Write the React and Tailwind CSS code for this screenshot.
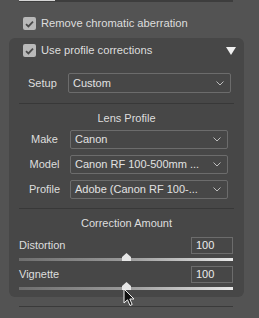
import React from "react";

function Check() {
  return (
    <div className="w-[13px] h-[13px] rounded-[2px] bg-[#b9b9b9] flex items-center justify-center">
      <svg width="9" height="8" viewBox="0 0 9 8">
        <path d="M1 4.2 3.4 6.4 8 1.6" fill="none" stroke="#4a4a4a" strokeWidth="1.8" />
      </svg>
    </div>
  );
}

function Chevron() {
  return (
    <svg width="8" height="5" viewBox="0 0 8 5" className="shrink-0">
      <path d="M0.5 0.5 4 4 7.5 0.5" fill="none" stroke="#bdbdbd" strokeWidth="1" />
    </svg>
  );
}

function Select({ text, className }) {
  return (
    <div
      className={
        "flex items-center justify-between border border-[#6c6c6c] rounded-[2px] pl-[4px] pr-[6px] text-[#e2e2e2] " +
        className
      }
    >
      <span className="whitespace-nowrap">{text}</span>
      <Chevron />
    </div>
  );
}

function Thumb() {
  return (
    <svg width="9" height="8" viewBox="0 0 9 8" className="absolute left-[103px] top-[-5px]">
      <path d="M4.5 0 9 4 9 8 0 8 0 4Z" fill="#e6e6e6" />
    </svg>
  );
}

function Slider({ label }) {
  return (
    <div className="flex flex-col">
      <div className="flex items-center justify-between h-[17px]">
        <span>{label}</span>
        <div className="w-[42px] h-[17px] border border-[#6c6c6c] pl-[4px] flex items-center text-[#ececec]">100</div>
      </div>
      <div className="relative mt-[4px] h-[3px] bg-gradient-to-r from-[#6e6e6e] via-[#9a9a9a] to-[#e8e8e8]">
        <Thumb />
      </div>
    </div>
  );
}

export default function App() {
  return (
    <div
      className="relative w-[259px] h-[318px] overflow-hidden bg-[#535353] text-[#dedede] text-[11px] leading-none"
      style={{ fontFamily: '"Liberation Sans", Arial, sans-serif' }}
    >
      <div className="ml-[19px] w-[214px] h-[2px] bg-[#3d3d3d] flex">
        <div className="w-[36px] h-[1px] bg-[#d6d6d6]" />
      </div>

      <div className="flex items-center gap-[5px] pl-[23px] mt-[15px] h-[13px]">
        <Check />
        <span className="text-[11.2px]">Remove chromatic aberration</span>
      </div>

      <div className="ml-[9px] mt-[8px] w-[235px] h-[259px] rounded-[6px] bg-[#474747] px-[10px] flex flex-col">
        <div className="flex items-center justify-between pl-[4px] -mr-[2px] mt-[6px] h-[13px]">
          <div className="flex items-center gap-[5px]">
            <Check />
            <span className="text-[11.2px]">Use profile corrections</span>
          </div>
          <svg width="10" height="8" viewBox="0 0 10 8">
            <path d="M0 0 10 0 5 8Z" fill="#f0f0f0" />
          </svg>
        </div>

        <div className="flex items-center mt-[16px] h-[20px]">
          <span className="w-[49px] pl-[9px]">Setup</span>
          <Select text="Custom" className="w-[163px] h-[20px]" />
        </div>

        <div className="mt-[10px] h-px bg-[#383838]" />

        <div className="mt-[9px] text-center h-[12px]">Lens Profile</div>

        <div className="mt-[5px] flex flex-col gap-[6px]">
          {[
            ["Make", "Canon"],
            ["Model", "Canon RF 100-500mm ..."],
            ["Profile", "Adobe (Canon RF 100-..."],
          ].map(([l, v]) => (
            <div key={l} className="flex items-center h-[19px]">
              <span className="w-[51px] text-center">{l}</span>
              <Select text={v} className="w-[158px] h-[19px]" />
            </div>
          ))}
        </div>

        <div className="mt-[9px] h-px bg-[#383838]" />

        <div className="mt-[9px] text-center h-[12px]">Correction Amount</div>

        <div className="mt-[7px] flex flex-col gap-[5px] pr-[1px]">
          <Slider label="Distortion" />
          <Slider label="Vignette" />
        </div>
      </div>

      <div className="ml-[19px] mt-[9px] w-[214px] h-px bg-[#3a3a3a]" />

      <svg
        width="12"
        height="19"
        viewBox="0 0 12 19"
        className="absolute left-[123px] top-[288px]"
      >
        <path d="M1 1 1 15 4.5 11.8 7 17.5 9.2 16.5 6.8 11 11 11Z" fill="#111" stroke="#f2f2f2" strokeWidth="1" />
      </svg>
    </div>
  );
}
